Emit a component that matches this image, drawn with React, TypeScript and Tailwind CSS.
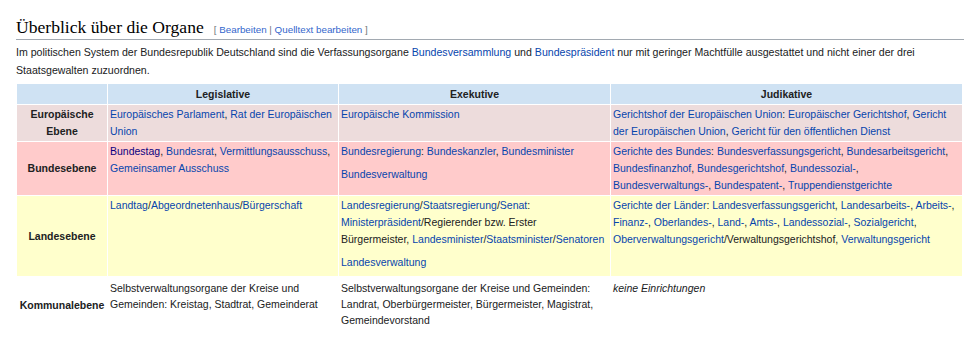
import React from 'react';

const A: React.FC<{ children: React.ReactNode; visited?: boolean }> = ({ children, visited }) => (
  <a className={visited ? 'text-[#0b0080]' : 'text-[#0645ad]'}>{children}</a>
);

const th = 'bg-[#cfe2f3] font-bold text-center h-[20px] p-0';
const td = 'align-top px-[2px] py-[1px] whitespace-nowrap';
const rowHead = 'font-bold text-center align-middle px-[2px]';

const App: React.FC = () => {
  return (
    <div className="w-[980px] h-[340px] overflow-hidden bg-white px-4 pt-[15px] text-[#202122] font-['Liberation_Sans',Arial,sans-serif]">
      <div className="flex items-baseline gap-[10px] border-b border-[#a2a9b1]">
        <h2 className="font-['Liberation_Serif','Times_New_Roman',serif] text-[17.6px] leading-[24px] text-black">
          Überblick über die Organe
        </h2>
        <span className="text-[9.8px] text-[#72777d]">
          [ <a className="text-[#3366cc]">Bearbeiten</a> | <a className="text-[#3366cc]">Quelltext bearbeiten</a> ]
        </span>
      </div>
      <p className="text-[10.6px] leading-[18px] mt-[3px]">
        Im politischen System der Bundesrepublik Deutschland sind die Verfassungsorgane <A>Bundesversammlung</A> und{' '}
        <A>Bundespräsident</A> nur mit geringer Machtfülle ausgestattet und nicht einer der drei Staatsgewalten zuzuordnen.
      </p>
      <table className="mt-[4px] w-[947px] table-fixed border-separate border-spacing-[1px] text-[10.5px] leading-[17px]">
        <colgroup>
          <col className="w-[90px]" />
          <col className="w-[230px]" />
          <col className="w-[271px]" />
          <col className="w-[351px]" />
        </colgroup>
        <thead>
          <tr>
            <th className={th}></th>
            <th className={th}>Legislative</th>
            <th className={th}>Exekutive</th>
            <th className={th}>Judikative</th>
          </tr>
        </thead>
        <tbody>
          <tr className="bg-[#eddcdc]">
            <th className={rowHead}>
              Europäische
              <br />
              Ebene
            </th>
            <td className={td}>
              <A>Europäisches Parlament</A>, <A>Rat der Europäischen</A>
              <br />
              <A>Union</A>
            </td>
            <td className={td}>
              <A>Europäische Kommission</A>
            </td>
            <td className={td}>
              <A>Gerichtshof der Europäischen Union</A>: <A>Europäischer Gerichtshof</A>, <A>Gericht</A>
              <br />
              <A>der Europäischen Union</A>, <A>Gericht für den öffentlichen Dienst</A>
            </td>
          </tr>
          <tr className="bg-[#ffcbcb]">
            <th className={rowHead}>Bundesebene</th>
            <td className={td}>
              <A visited>Bundestag</A>, <A>Bundesrat</A>, <A>Vermittlungsausschuss</A>,
              <br />
              <A>Gemeinsamer Ausschuss</A>
            </td>
            <td className={td}>
              <p>
                <A>Bundesregierung</A>: <A>Bundeskanzler</A>, <A>Bundesminister</A>
              </p>
              <p className="mt-[6px]">
                <A>Bundesverwaltung</A>
              </p>
            </td>
            <td className={td}>
              <A>Gerichte des Bundes</A>: <A>Bundesverfassungsgericht</A>, <A>Bundesarbeitsgericht</A>,
              <br />
              <A>Bundesfinanzhof</A>, <A>Bundesgerichtshof</A>, <A>Bundessozial-</A>,
              <br />
              <A>Bundesverwaltungs-</A>, <A>Bundespatent-</A>, <A>Truppendienstgerichte</A>
            </td>
          </tr>
          <tr className="bg-[#ffffcc]">
            <th className={`${rowHead} h-[80px]`}>Landesebene</th>
            <td className={td}>
              <A>Landtag</A>/<A>Abgeordnetenhaus</A>/<A>Bürgerschaft</A>
            </td>
            <td className={td}>
              <p>
                <A>Landesregierung</A>/<A>Staatsregierung</A>/<A>Senat</A>:
                <br />
                <A>Ministerpräsident</A>/Regierender bzw. Erster
                <br />
                Bürgermeister, <A>Landesminister</A>/<A>Staatsminister</A>/<A>Senatoren</A>
              </p>
              <p className="mt-[6px]">
                <A>Landesverwaltung</A>
              </p>
            </td>
            <td className={td}>
              <A>Gerichte der Länder</A>: <A>Landesverfassungsgericht</A>, <A>Landesarbeits-</A>, <A>Arbeits-</A>,
              <br />
              <A>Finanz-</A>, <A>Oberlandes-</A>, <A>Land-</A>, <A>Amts-</A>, <A>Landessozial-</A>, <A>Sozialgericht</A>,
              <br />
              <A>Oberverwaltungsgericht</A>/Verwaltungsgerichtshof, <A>Verwaltungsgericht</A>
            </td>
          </tr>
          <tr className="leading-[16px]">
            <th className={`${rowHead} pt-[3px]`}>Kommunalebene</th>
            <td className={`${td} pt-[3px]`}>
              Selbstverwaltungsorgane der Kreise und
              <br />
              Gemeinden: Kreistag, Stadtrat, Gemeinderat
            </td>
            <td className={`${td} pt-[3px]`}>
              Selbstverwaltungsorgane der Kreise und Gemeinden:
              <br />
              Landrat, Oberbürgermeister, Bürgermeister, Magistrat,
              <br />
              Gemeindevorstand
            </td>
            <td className={`${td} pt-[3px]`}>
              <i>keine Einrichtungen</i>
            </td>
          </tr>
        </tbody>
      </table>
    </div>
  );
};

export default App;
